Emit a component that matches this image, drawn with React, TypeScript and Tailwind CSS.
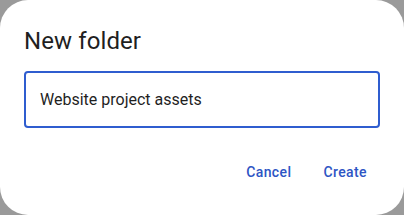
import React from "react";

export default function App() {
  return (
    <div className="w-[404px] h-[215px] bg-[#9a9a9a]" style={{ fontFamily: "Roboto, 'Noto Sans', sans-serif" }}>
      <div className="w-full h-full bg-white rounded-[28px] flex flex-col px-6 pt-[25px]">
        <h1 className="text-[24px] leading-8 text-[#1f1f1f] font-normal tracking-[0.1px]">New folder</h1>
        <div className="mt-[14px] h-[57px] border-2 border-[#2f5dcf] rounded-[4px] flex items-center px-[14px]">
          <span className="text-[16px] text-[#1f1f1f]">Website project assets</span>
        </div>
        <div className="mt-6 flex justify-end gap-2 pr-[1px]">
          <button className="h-10 px-3 text-[14px] font-medium text-[#2d55c4] tracking-[0.4px]">Cancel</button>
          <button className="h-10 px-3 text-[14px] font-medium text-[#2d55c4] tracking-[0.4px]">Create</button>
        </div>
      </div>
    </div>
  );
}
